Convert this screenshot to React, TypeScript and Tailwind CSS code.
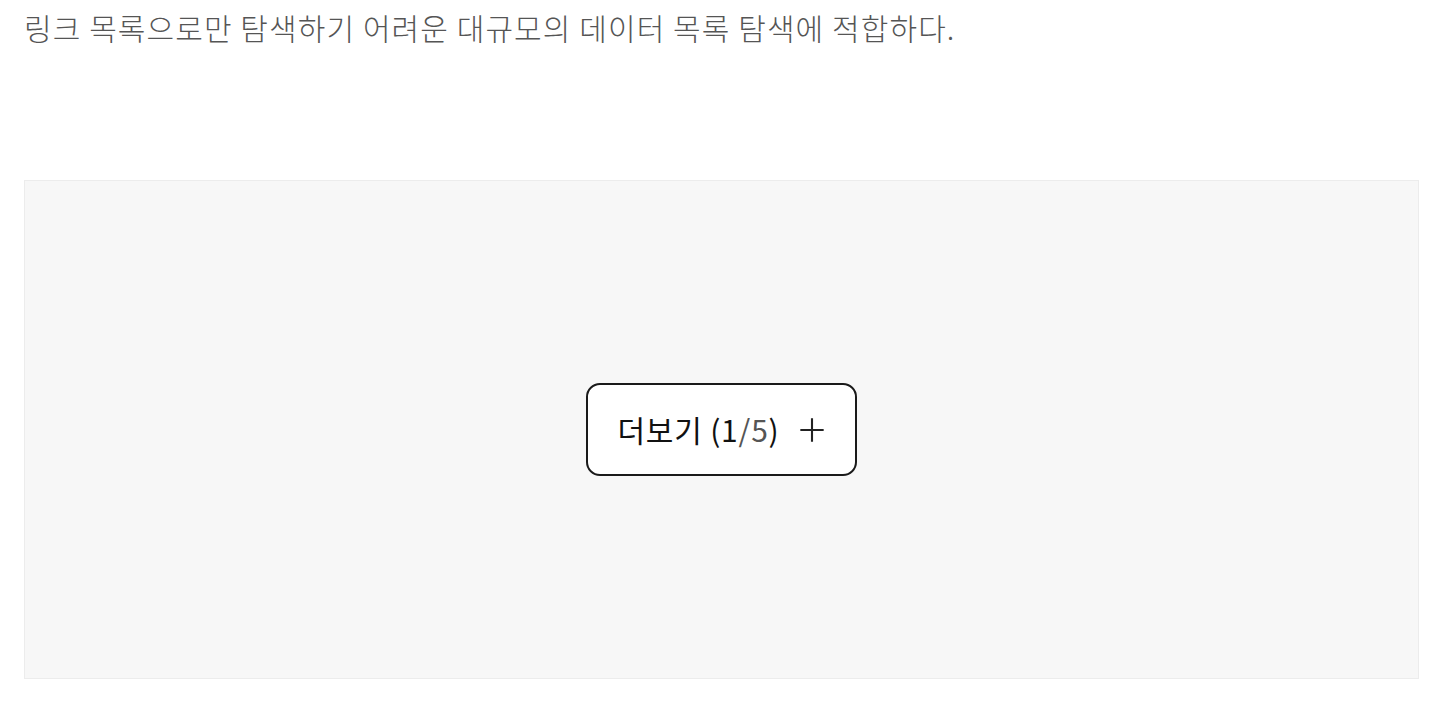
import React from 'react';

const font = { fontFamily: '"Noto Sans CJK KR", "Noto Sans", sans-serif' };

export default function App() {
  return (
    <div className="bg-white min-h-screen px-6" style={font}>
      <p className="text-[30px] leading-[54px] text-[#555] font-light tracking-[1.1px]">
        링크 목록으로만 탐색하기 어려운 대규모의 데이터 목록 탐색에 적합하다.
      </p>
      <div className="mt-[126px] h-[499px] bg-[#f7f7f7] border border-[#ececec] flex items-center justify-center">
        <button className="h-[93px] w-[271px] rounded-[14px] border-2 border-[#1a1a1a] bg-white flex items-center justify-center gap-[18px] text-[30px] text-[#111]">
          <span className="tracking-[0.8px]">
            더보기 (1<span className="text-[#555]">/5</span>)
          </span>
          <svg width="28" height="28" viewBox="0 0 24 24" fill="none" stroke="#222" strokeWidth="1.8">
            <path d="M12 2v20M2 12h20" />
          </svg>
        </button>
      </div>
    </div>
  );
}
